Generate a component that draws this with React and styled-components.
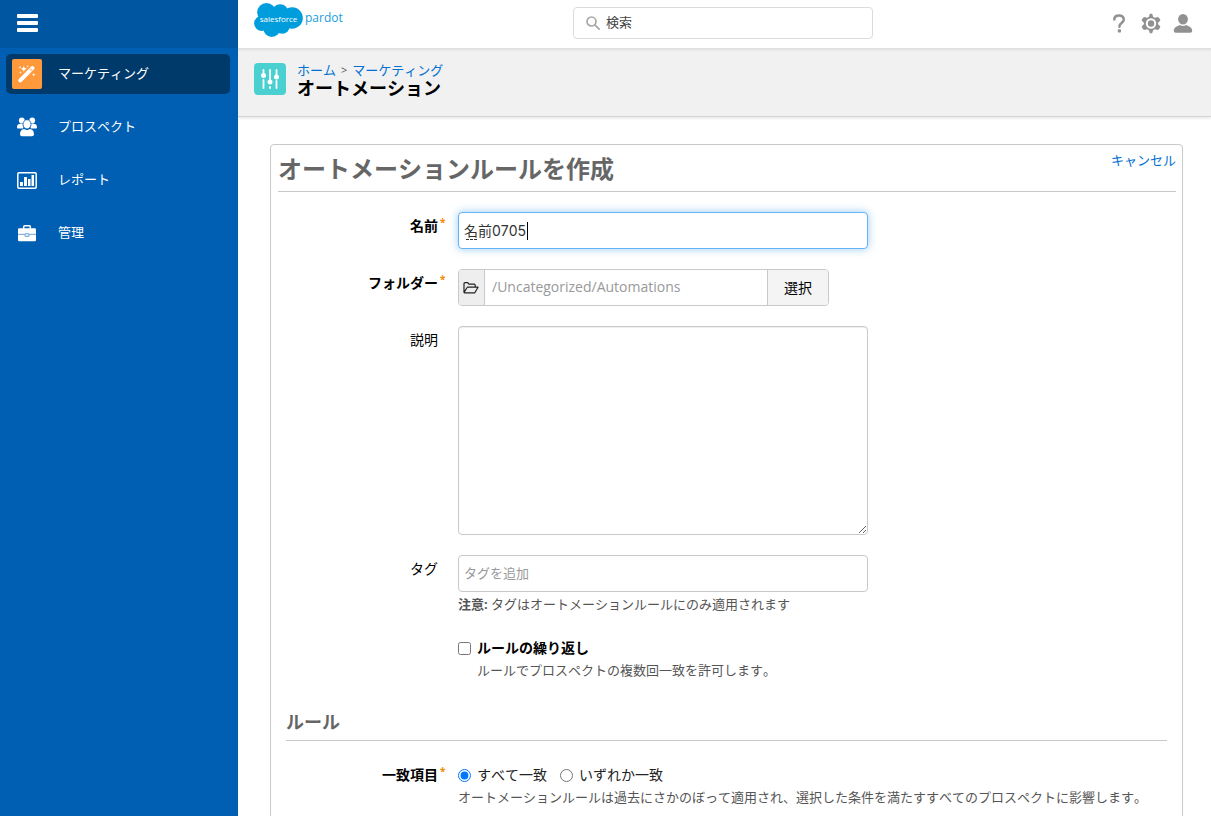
import React, { useState } from "react";
import styled, { createGlobalStyle } from "styled-components";

const fonts = `"Open Sans", "Noto Sans CJK JP", sans-serif`;

const GlobalStyle = createGlobalStyle`
  *, *::before, *::after { box-sizing: border-box; }
  body { margin: 0; background: #fff; color: #000; font: 13px/20px ${fonts}; font-kerning: none; }
  button, input, textarea { font: inherit; font-kerning: none; color: inherit; margin: 0; }
  h1, h2, p, ul { margin: 0; padding: 0; }
  a { color: #0070d2; text-decoration: none; }
  svg { display: block; flex: none; }
`;

const Shell = styled.div`
  display: flex;
  height: 100vh;
  overflow: hidden;
`;

const Sidebar = styled.aside`
  flex: 0 0 238px;
  background: #005fb2;
  color: #fff;
`;

const SidebarTop = styled.div`
  display: flex;
  align-items: center;
  height: 48px;
  padding: 0 16px 3px;
  background: #0056a0;
`;

const IconButton = styled.button`
  display: flex;
  align-items: center;
  justify-content: center;
  padding: 0;
  border: 0;
  background: none;
  color: ${(p) => p.$tone || "#919191"};
  cursor: pointer;
`;

const NavList = styled.ul`
  display: flex;
  flex-direction: column;
  gap: 13px;
  padding: 6px 8px 0 6px;
  list-style: none;
`;

const NavLink = styled.a`
  display: flex;
  align-items: center;
  gap: 16px;
  height: 40px;
  padding: 0 6px;
  border-radius: 5px;
  color: #fff;
  background: ${(p) => (p.$active ? "#003a6b" : "transparent")};
`;

const NavText = styled.span`
  padding-bottom: 2px;
`;

const NavIcon = styled.span`
  display: flex;
  align-items: center;
  justify-content: center;
  width: 30px;
  height: 30px;
  border-radius: 2px;
  background: ${(p) => (p.$active ? "#ff9a3c" : "transparent")};
`;

const Main = styled.div`
  flex: 1;
  min-width: 0;
  height: 100vh;
  overflow: hidden;
`;

const TopBar = styled.header`
  display: grid;
  grid-template-columns: 1fr 300px 1fr;
  align-items: center;
  height: 48px;
  padding: 0 19px 0 16px;
  background: #fff;
`;

const Logo = styled.a`
  display: flex;
  align-items: center;
  gap: 2px;
  height: 46px;
  padding-bottom: 8px;
  color: #1a9dd9;
  font-family: "Open Sans", sans-serif;
  font-size: 12px;
`;

const LogoCloud = styled.span`
  position: relative;
`;

const LogoName = styled.span`
  position: absolute;
  inset: 0;
  color: #fff;
  font-size: 8px;
  line-height: 32px;
  text-align: center;
`;

const LogoProduct = styled.span`
  line-height: 16px;
  padding-bottom: 4px;
`;

const Search = styled.label`
  display: flex;
  align-items: center;
  gap: 6px;
  height: 32px;
  padding: 0 12px;
  margin-bottom: 2px;
  border: 1px solid #dddbda;
  border-radius: 4px;
  color: #aaa8a6;
`;

const SearchInput = styled.input`
  flex: 1;
  min-width: 0;
  padding: 0 0 2px;
  border: 0;
  outline: 0;
  background: none;
  line-height: 20px;
  &::placeholder { color: #444; opacity: 1; }
`;

const Tools = styled.div`
  display: flex;
  justify-content: flex-end;
  gap: 8px;
  margin-right: -3px;
  padding-bottom: 2px;
`;

const PageHeader = styled.div`
  display: flex;
  gap: 11px;
  height: 69px;
  padding: 14px 16px 0;
  background: #f1f1f1;
  border-bottom: 1px solid #d4d4d4;
  box-shadow: inset 0 3px 2px -1px #dedede, 0 2px 2px rgba(0, 0, 0, 0.08);
`;

const PageIcon = styled.span`
  display: flex;
  align-items: center;
  justify-content: center;
  width: 32px;
  height: 32px;
  margin-top: 1px;
  border-radius: 4px;
  background: #4bd0d2;
`;

const Crumbs = styled.nav`
  display: flex;
  gap: 5px;
  color: #555;
  line-height: 16px;
`;

const CrumbArrow = styled.span`
  font-size: 11px;
`;

const PageTitle = styled.h1`
  font-size: 18px;
  line-height: 20px;
  font-weight: 700;
`;

const Panel = styled.form`
  margin: 27px 28px 0 32px;
  padding: 0 6px 40px 7px;
  border: 1px solid #c9c9c9;
  border-radius: 4px;
`;

const PanelHead = styled.div`
  display: flex;
  justify-content: space-between;
  height: 47px;
  border-bottom: 1px solid #c9c9c9;
`;

const PanelTitle = styled.h2`
  color: #666;
  font-size: 24px;
  line-height: 48px;
  font-weight: 700;
`;

const Cancel = styled.a`
  line-height: 30px;
`;

const Row = styled.div`
  display: grid;
  grid-template-columns: 160px 20px minmax(0, 1fr);
  margin-top: 20px;
`;

const RowLabel = styled.label`
  padding-top: 4px;
  font-size: 14px;
  line-height: 20px;
  font-weight: ${(p) => (p.$required ? 700 : 400)};
  text-align: right;
`;

const Star = styled.span`
  padding-left: 2px;
  color: #f28b00;
  font-size: 10px;
  line-height: 20px;
  font-weight: 700;
`;

const Field = styled.div`
  position: relative;
  max-width: 410px;
`;

const TextInput = styled.input`
  display: block;
  width: 100%;
  height: 37px;
  padding: 0 5px 2px;
  border: 1px solid ${(p) => (p.$active ? "#66b3f5" : "#c9c9c9")};
  border-radius: 4px;
  outline: 0;
  background: #fff;
  color: #333;
  caret-color: ${(p) => (p.$active ? "transparent" : "auto")};
  font-family: ${(p) => (p.$active ? `Inter, ${fonts}` : fonts)};
  font-size: ${(p) => (p.$active ? 14 : 13)}px;
  box-shadow: ${(p) => (p.$active ? "0 0 8px rgba(82, 168, 236, 0.6)" : "none")};
  &::placeholder { color: #999; opacity: 1; }
`;

const Caret = styled.span`
  position: absolute;
  left: 69px;
  top: 10px;
  width: 1px;
  height: 18px;
  background: #000;
`;

const Composing = styled.span`
  position: absolute;
  left: 8px;
  top: 27px;
  width: 11px;
  border-bottom: 1px dashed #333;
`;

const FolderGroup = styled.div`
  display: flex;
  max-width: 371px;
  height: 37px;
  border: 1px solid #c9c9c9;
  border-radius: 4px;
  overflow: hidden;
`;

const FolderIcon = styled.span`
  display: flex;
  align-items: center;
  justify-content: center;
  flex: 0 0 26px;
  padding-right: 2px;
  background: #eee;
  border-right: 1px solid #c9c9c9;
`;

const FolderInput = styled.input`
  flex: 1;
  min-width: 0;
  padding: 0 7px 2px;
  border: 0;
  outline: 0;
  color: #999;
  font-size: 14px;
`;

const ChooseButton = styled.button`
  flex: 0 0 61px;
  padding: 0;
  border: 0;
  border-left: 1px solid #c9c9c9;
  background: #f4f4f4;
  font-size: 14px;
`;

const TextArea = styled.textarea`
  display: block;
  width: 100%;
  height: 209px;
  padding: 6px;
  border: 1px solid #c9c9c9;
  border-radius: 4px;
  outline: 0;
  resize: both;
  box-shadow: inset 0 1px 1px #eee;
`;

const Hint = styled.p`
  margin-top: 2px;
  color: #555;
  line-height: 20px;
  padding-left: ${(p) => (p.$indent ? 19 : 0)}px;
`;

const Choices = styled.div`
  display: flex;
  gap: 13px;
  padding-top: 4px;
`;

const Choice = styled.label`
  display: flex;
  align-items: center;
  gap: 6px;
  color: ${(p) => (p.$bold ? "#000" : "#222")};
  font-size: 14px;
  line-height: 20px;
  font-weight: ${(p) => (p.$bold ? 700 : 400)};
  input { width: 13px; height: 13px; }
`;

const SectionTitle = styled.h2`
  margin: 31px 9px 0 8px;
  height: 30px;
  border-bottom: 1px solid #c9c9c9;
  color: #666;
  font-size: 18px;
  line-height: 22px;
  font-weight: 700;
`;

const MenuIcon = () => (
  <svg width="22" height="18" viewBox="0 0 22 18" fill="currentColor">
    <rect x="1" y="0" width="21" height="4" rx="1" />
    <rect x="1" y="7" width="21" height="4" rx="1" />
    <rect x="1" y="14" width="21" height="4" rx="1" />
  </svg>
);

const WandIcon = () => (
  <svg width="18" height="18" viewBox="0 0 18 18">
    <path d="M2.3 15.4 14.4 3.2" stroke="#fff" strokeWidth="4" strokeLinecap="round" />
    <path d="m11.7 4.3 2 2M12.4 3.5l2 2" stroke="#ff9a3c" strokeWidth=".7" />
    <path d="m5.8.6.9 2.3 2.3.9-2.3.9-.9 2.3-.9-2.3-2.3-.9 2.3-.9zM2 1l.4 1 .9.4-.9.3L2 3.6l-.4-.9-1-.3 1-.4zM9.8 0l.4.9.9.4-.9.3-.4.9-.3-.9-1-.3 1-.4zM2.4 6.2l.4.9.9.3-.9.4-.4.9-.3-.9-1-.4 1-.3zM15.7 8l.5 1.3 1.2.5-1.2.4-.5 1.3-.5-1.3-1.2-.4 1.2-.5z" fill="#fff" />
  </svg>
);

const PeopleIcon = () => (
  <svg width="20" height="20" viewBox="0 0 20 20" fill="#fff">
    <circle cx="4.8" cy="3.5" r="2.9" />
    <circle cx="15.2" cy="3.5" r="2.9" />
    <path d="M0 10.2C0 7.8 1.5 6.8 3.5 6.8h2.2c1.1 2.5 1 3.8.2 4.8H1.2C.4 11.6 0 11 0 10.2zM20 10.2c0-2.4-1.5-3.4-3.5-3.4h-2.2c-1.1 2.5-1 3.8-.2 4.8h4.7c.8 0 1.2-.6 1.2-1.4z" />
    <ellipse cx="10" cy="7.3" rx="4" ry="4.6" stroke="#005fb2" strokeWidth=".8" />
    <path d="M3 17.2c0-3.3 1.6-5 4.1-5.3 1.800 1.300 4 1.300 5.800 0 2.500.3 4.100 2 4.100 5.300 0 1.300-.9 2-2.100 2H5.100C3.900 19.200 3 18.500 3 17.200z" />
  </svg>
);

const ReportIcon = () => (
  <svg width="20" height="17" viewBox="0 0 20 17" fill="#fff">
    <rect x=".8" y=".8" width="18.4" height="15.4" rx="1.2" fill="none" stroke="#fff" strokeWidth="1.5" />
    <path d="M3 10h3v4H3zM7 5h3v9H7zM11 7h2.500v7H11zM14.500 3H17v11h-2.500z" />
  </svg>
);

const CaseIcon = () => (
  <svg width="20" height="17" viewBox="0 0 20 17">
    <path d="M6.700 4V1.800c0-.6.4-1 1-1h4.600c.6 0 1 .4 1 1V4" fill="none" stroke="#fff" strokeWidth="1.5" />
    <rect x="1" y="3.3" width="18" height="13" rx="1.2" fill="#fff" />
    <path d="M1 9.300h6.700M12.300 9.300H19M8 8.800h4v2.500H8z" fill="none" stroke="#5c99d0" strokeWidth=".9" />
  </svg>
);

const SearchIcon = () => (
  <svg width="14" height="14" viewBox="0 0 14 14" fill="none" stroke="currentColor" strokeWidth="1.7">
    <circle cx="5.5" cy="5.5" r="4.5" />
    <path d="m8.800 8.800 4.400 4.400" strokeLinecap="round" />
  </svg>
);

const HelpIcon = () => (
  <svg width="24" height="24" viewBox="0 0 24 24">
    <path d="M7.300 8.600C7.300 5.900 9.300 4.400 12 4.400s4.800 1.700 4.800 4.200c0 3.400-4.400 3.200-4.400 6.600v.6" fill="none" stroke="currentColor" strokeWidth="2.5" strokeLinecap="round" />
    <rect x="10.8" y="18.3" width="3.2" height="3.2" rx=".8" fill="currentColor" />
  </svg>
);

const GearIcon = () => (
  <svg width="24" height="24" viewBox="0 0 24 24">
    <path d="M10.800 2.800h2.400l.9 3 1.700 1 3.100-.8 1.500 1.300 1 2.100-2.300 2.300v1.600l2.300 2.300-1.200 2.300-1.300 1.200-3.100-.9-1.700 1-.9 3h-2.400l-.9-3-1.700-1-3.100.9-1.300-1.200-1.200-2.300 2.300-2.300v-1.600L2.600 9.400l1-2.100L5.100 6l3.100.8 1.700-1z" fill="currentColor" />
    <circle cx="12" cy="12.5" r="4.2" fill="none" stroke="#fff" strokeWidth="2" />
  </svg>
);

const UserIcon = () => (
  <svg width="24" height="24" viewBox="0 0 24 24" fill="currentColor">
    <ellipse cx="12" cy="8.2" rx="4.9" ry="5.2" />
    <path d="M2.800 19.700c0-3.100 3.200-4.700 6.200-5.700 1.900 1.200 4.100 1.200 6 0 3 1 6.200 2.600 6.200 5.700 0 1.300-.8 2-2 2H4.800c-1.200 0-2-.7-2-2z" />
  </svg>
);

const SlidersIcon = () => (
  <svg width="20" height="22" viewBox="0 0 20 22" stroke="#fff" fill="#fff" strokeWidth="1.8" strokeLinecap="round">
    <path d="M3.500 2v5M3.500 12v8M10 2v11M10 19v1M16.500 2v6M16.500 13v7" />
    <circle cx="3.5" cy="7.5" r="1.600" />
    <circle cx="10" cy="14" r="1.600" />
    <circle cx="16.5" cy="9" r="1.600" />
  </svg>
);

const CloudIcon = () => (
  <svg width="49" height="34" viewBox="0 0 146 102" fill="#009ddc">
    <circle cx="37" cy="28" r="28" />
    <circle cx="78" cy="29" r="25" />
    <circle cx="114" cy="45" r="32" />
    <circle cx="23" cy="61" r="23" />
    <circle cx="53" cy="77" r="25" />
    <circle cx="84" cy="69" r="23" />
    <path d="M24 30h90v45H24z" />
  </svg>
);

const OpenFolderIcon = () => (
  <svg width="16" height="14" viewBox="0 0 16 14" fill="none" stroke="#222" strokeWidth="1.2" strokeLinejoin="round">
    <path d="M1 11.500V2.600c0-.6.400-1 1-1h2.700l1.200 1.600h5.300c.6 0 1 .4 1 1v2M1 11.500l3.300-5.300H15l-3.200 5.600H1.500z" />
  </svg>
);

const navItems = [
  { label: "マーケティング", Icon: WandIcon, active: true },
  { label: "プロスペクト", Icon: PeopleIcon },
  { label: "レポート", Icon: ReportIcon },
  { label: "管理", Icon: CaseIcon },
];

function FormRow({ label, htmlFor, required, children }) {
  return (
    <Row>
      <RowLabel as={label ? "label" : "span"} htmlFor={htmlFor} $required={required}>{label}</RowLabel>
      <Star>{required ? "*" : ""}</Star>
      <div>{children}</div>
    </Row>
  );
}

export default function App() {
  const [name, setName] = useState("名前0705");
  const [match, setMatch] = useState("all");
  return (
    <Shell>
      <GlobalStyle />
      <Sidebar>
        <SidebarTop>
          <IconButton type="button" $tone="#fff" aria-label="メニュー"><MenuIcon /></IconButton>
        </SidebarTop>
        <NavList>
          {navItems.map(({ label, Icon, active }) => (
            <li key={label}>
              <NavLink href="#" $active={active}>
                <NavIcon $active={active}><Icon /></NavIcon>
                <NavText>{label}</NavText>
              </NavLink>
            </li>
          ))}
        </NavList>
      </Sidebar>
      <Main>
        <TopBar>
          <Logo href="#">
            <LogoCloud><CloudIcon /><LogoName>salesforce</LogoName></LogoCloud>
            <LogoProduct>pardot</LogoProduct>
          </Logo>
          <Search>
            <SearchIcon />
            <SearchInput type="text" placeholder="検索" aria-label="検索" />
          </Search>
          <Tools>
            <IconButton type="button" aria-label="ヘルプ"><HelpIcon /></IconButton>
            <IconButton type="button" aria-label="設定"><GearIcon /></IconButton>
            <IconButton type="button" aria-label="ユーザー"><UserIcon /></IconButton>
          </Tools>
        </TopBar>
        <PageHeader>
          <PageIcon><SlidersIcon /></PageIcon>
          <div>
            <Crumbs><a href="#">ホーム</a><CrumbArrow>&gt;</CrumbArrow><a href="#">マーケティング</a></Crumbs>
            <PageTitle>オートメーション</PageTitle>
          </div>
        </PageHeader>
        <Panel onSubmit={(e) => e.preventDefault()}>
          <PanelHead>
            <PanelTitle>オートメーションルールを作成</PanelTitle>
            <Cancel href="#">キャンセル</Cancel>
          </PanelHead>
          <FormRow label="名前" htmlFor="name" required>
            <Field>
              <TextInput id="name" type="text" $active value={name} onChange={(e) => setName(e.target.value)} />
              <Caret />
              <Composing />
            </Field>
          </FormRow>
          <FormRow label="フォルダー" htmlFor="folder" required>
            <FolderGroup>
              <FolderIcon><OpenFolderIcon /></FolderIcon>
              <FolderInput id="folder" type="text" readOnly value="/Uncategorized/Automations" />
              <ChooseButton type="button">選択</ChooseButton>
            </FolderGroup>
          </FormRow>
          <FormRow label="説明" htmlFor="description">
            <Field><TextArea id="description" /></Field>
          </FormRow>
          <FormRow label="タグ" htmlFor="tags">
            <Field><TextInput id="tags" type="text" placeholder="タグを追加" /></Field>
            <Hint><b>注意:</b> タグはオートメーションルールにのみ適用されます</Hint>
          </FormRow>
          <FormRow>
            <Choices>
              <Choice $bold><input type="checkbox" />ルールの繰り返し</Choice>
            </Choices>
            <Hint $indent>ルールでプロスペクトの複数回一致を許可します。</Hint>
          </FormRow>
          <SectionTitle>ルール</SectionTitle>
          <FormRow label="一致項目" htmlFor="match-all" required>
            <Choices>
              <Choice><input id="match-all" type="radio" name="match" checked={match === "all"} onChange={() => setMatch("all")} />すべて一致</Choice>
              <Choice><input type="radio" name="match" checked={match === "any"} onChange={() => setMatch("any")} />いずれか一致</Choice>
            </Choices>
            <Hint>オートメーションルールは過去にさかのぼって適用され、選択した条件を満たすすべてのプロスペクトに影響します。</Hint>
          </FormRow>
        </Panel>
      </Main>
    </Shell>
  );
}
